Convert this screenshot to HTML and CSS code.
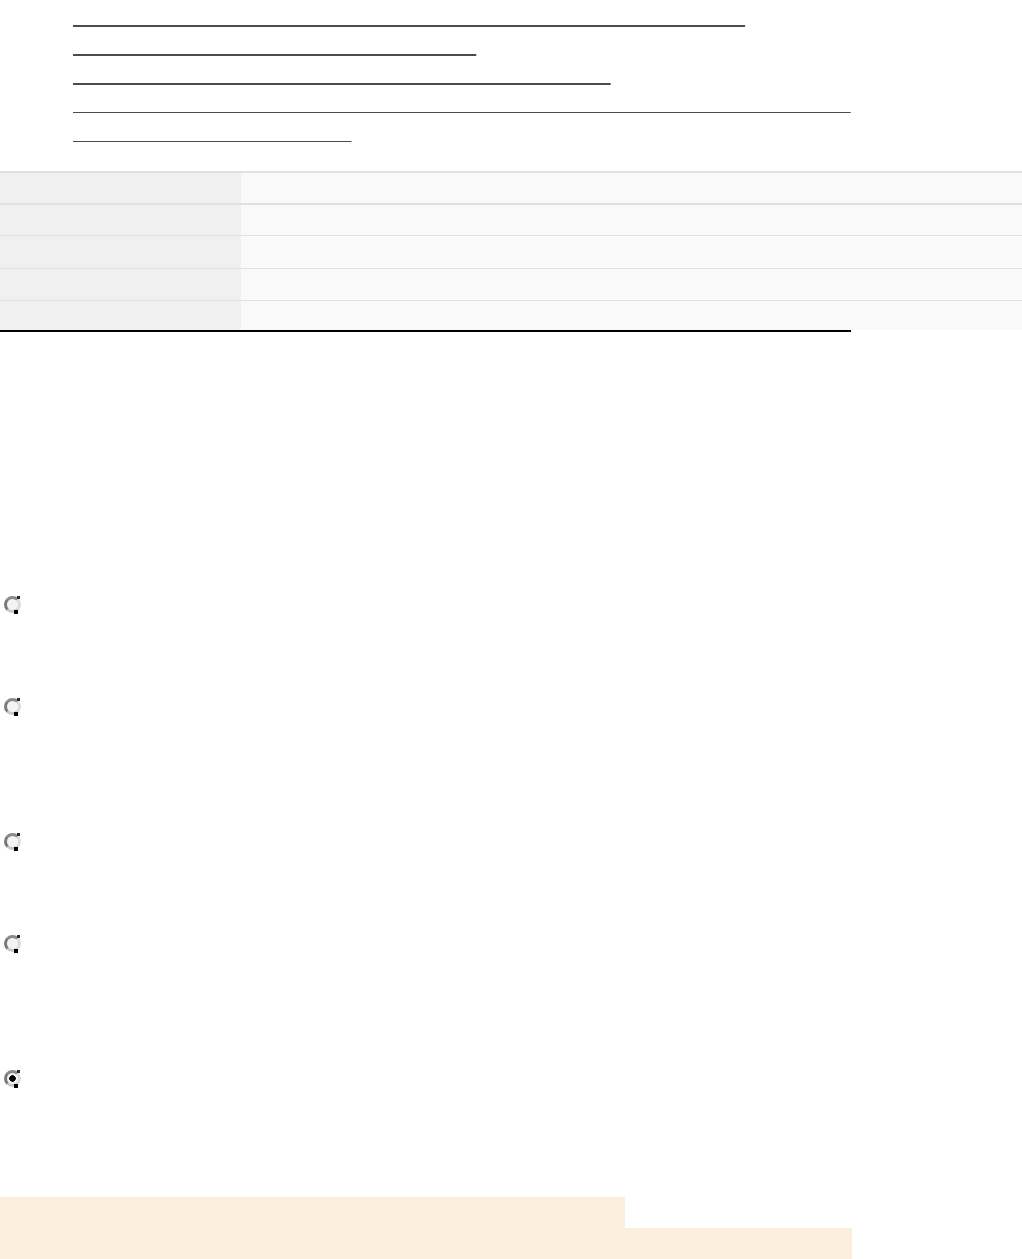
FILE: index.html
```html
<!DOCTYPE html>
<html lang="en">
<head>
<meta charset="utf-8">
<title>Reference</title>
<link rel="stylesheet" href="styles.css">
</head>
<body>
<ul class="links">
  <li><a class="link strong" href="#">Overview of the installation and configuration guide for new engineers</a></li>
  <li><a class="link strong" href="#">Frequently asked questions about licensing</a></li>
  <li><a class="link strong" href="#">Release notes and known issues for the current versions.</a></li>
  <li><a class="link url" href="#">https://doc.example.com/reference/configuration/advanced/networking/proxy-settings-and-certificates/index.html</a></li>
</ul>

<section class="specs">
  <table class="spec-table">
    <tr><th>Version</th><td>4.2.1</td></tr>
    <tr><th>Platform</th><td>Linux, macOS, Windows</td></tr>
    <tr><th>License</th><td>Commercial</td></tr>
    <tr><th>Size</th><td>128 MB</td></tr>
    <tr><th>Updated</th><td>March 2024</td></tr>
  </table>
</section>

<form class="choices">
  <label class="option">
    <span class="radio"></span>
    <span class="option-text">Standard installation</span>
  </label>
  <label class="option long">
    <span class="radio"></span>
    <span class="option-text">Custom installation</span>
  </label>
  <label class="option">
    <span class="radio"></span>
    <span class="option-text">Minimal installation</span>
  </label>
  <label class="option long">
    <span class="radio"></span>
    <span class="option-text">Portable installation</span>
  </label>
  <label class="option">
    <span class="radio checked"></span>
    <span class="option-text">Upgrade existing installation</span>
  </label>
</form>

<div class="notice">
  <span class="notice-line first">Please back up your data before continuing.</span>
  <span class="notice-line second">The installer will restart the service when it finishes.</span>
</div>
</body>
</html>
```

FILE: styles.css
```css
html, body {
  margin: 0;
  padding: 0;
  background: #ffffff;
}

body {
  font-family: "Liberation Sans", Arial, sans-serif;
  font-size: 16px;
  color: #ffffff;
  width: 1022px;
  overflow: hidden;
}

.links {
  list-style: none;
  margin: 0;
  padding: 6px 0 0 73px;
  width: 778px;
  font-family: "Liberation Mono", monospace;
  font-size: 16px;
  line-height: 29px;
}

.link {
  color: transparent;
  text-decoration: underline;
  text-decoration-color: #454d57;
  text-decoration-skip-ink: none;
}

.link.strong {
  text-decoration-thickness: 2px;
}

.link.url {
  text-decoration-thickness: 1px;
  word-break: break-all;
}

.specs {
  margin-top: 20px;
  width: 851px;
  border-bottom: 2px solid #000000;
}

.spec-table {
  width: 1022px;
  border-collapse: collapse;
  border-top: 2px solid #dde1e5;
  font-size: 14px;
}

.spec-table th,
.spec-table td {
  height: 30px;
  padding: 0 12px;
  text-align: left;
  font-weight: normal;
  border-bottom: 1px solid #e2e2e4;
}

.spec-table th {
  width: 217px;
  background: #f0f0f0;
  color: #f0f0f0;
}

.spec-table td {
  background: #f9f9f9;
  color: #f9f9f9;
}

.spec-table tr:first-child th,
.spec-table tr:first-child td {
  border-bottom: 2px solid #dde1e5;
}

.spec-table tr:nth-child(3) th,
.spec-table tr:nth-child(3) td {
  height: 32px;
}

.spec-table tr:nth-child(4) th,
.spec-table tr:nth-child(4) td {
  height: 31px;
}

.spec-table tr:last-child th,
.spec-table tr:last-child td {
  height: 29px;
  border-bottom: none;
}

.choices {
  margin-top: 264px;
  display: flex;
  flex-direction: column;
}

.option {
  display: flex;
  align-items: flex-start;
  gap: 10px;
  min-height: 102px;
  padding-left: 4px;
}

.option.long {
  min-height: 135px;
}

.option-text {
  color: #ffffff;
  line-height: 17px;
}

.radio {
  position: relative;
  flex: none;
  width: 17px;
  height: 17px;
  box-sizing: border-box;
  border-radius: 50%;
  border: 3px solid;
  border-top-color: #8a8a8a;
  border-left-color: #7a7a7a;
  border-right-color: #dcdcdc;
  border-bottom-color: #c8c8c8;
  background: #f4f4f4;
}

.radio::after {
  content: "";
  position: absolute;
  right: 0;
  bottom: -4px;
  width: 4px;
  height: 4px;
  background: #000000;
}

.radio::before {
  content: "";
  position: absolute;
  right: -2px;
  top: -3px;
  width: 3px;
  height: 3px;
  background: #2a2a2a;
}

.radio.checked {
  background: radial-gradient(circle at 50% 50%, #000000 0 3px, #f4f4f4 3.5px);
}

.notice {
  margin-top: 25px;
  display: flex;
  flex-direction: column;
  align-items: flex-start;
}

.notice-line {
  display: block;
  height: 31px;
  background: #fbeedd;
  color: #fbeedd;
  line-height: 31px;
}

.notice-line.first {
  width: 625px;
}

.notice-line.second {
  width: 852px;
  height: 31px;
  line-height: 31px;
}
```
